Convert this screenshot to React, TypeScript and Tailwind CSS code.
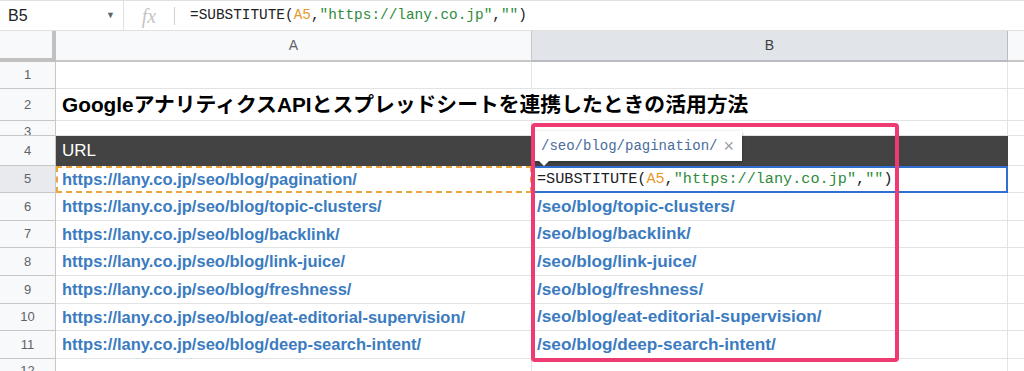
import React from 'react';

const urls = [
    'pagination',
    'topic-clusters',
    'backlink',
    'link-juice',
    'freshness',
    'eat-editorial-supervision',
    'deep-search-intent',
];

const rowHeights = [28, 27, 28, 28, 27, 28];

const sans = { fontFamily: '"Liberation Sans", Arial, "Noto Sans CJK JP", sans-serif' };
const mono = { fontFamily: '"Liberation Mono", "DejaVu Sans Mono", monospace' };

const Formula: React.FC = () => (
    <>
        <span className="text-[#202124]">=SUBSTITUTE(</span>
        <span className="text-[#e39b2c]">A5</span>
        <span className="text-[#202124]">,</span>
        <span className="text-[#2e8b3c]">"https://lany.co.jp"</span>
        <span className="text-[#202124]">,</span>
        <span className="text-[#2e8b3c]">""</span>
        <span className="text-[#202124]">)</span>
    </>
);

const RowHead: React.FC<{ n: number; active?: boolean; h: string }> = ({ n, active, h }) => (
    <div
        className={`w-[56px] shrink-0 flex items-center justify-center border-r border-b border-[#c7c7c7] text-[13px] text-[#5f6368] ${h} ${active ? 'bg-[#e8eaed]' : 'bg-[#f8f9fa]'}`}
    >
        {n}
    </div>
);

const App: React.FC = () => {
    return (
        <div className="relative w-[1024px] h-[371px] overflow-hidden bg-white" style={sans}>
            {/* Formula bar */}
            <div className="h-[31px] flex items-center border-t border-b border-[#e0e0e0]">
                <div className="w-[123px] shrink-0 flex items-center justify-between pl-2 pr-2 text-[16px] text-[#202124]">
                    <span>B5</span>
                    <span className="text-[9px] text-[#5f6368]">▼</span>
                </div>
                <div className="h-[30px] w-px bg-[#e0e0e0]" />
                <div className="w-[50px] flex items-center justify-center text-[20px] italic text-[#c4c4c4]" style={{ fontFamily: '"Liberation Serif", serif' }}>
                    fx
                </div>
                <div className="h-[18px] w-px bg-[#d0d0d0]" />
                <div className="pl-[15px] text-[14.4px] whitespace-nowrap" style={mono}>
                    <Formula />
                </div>
            </div>

            {/* Column headers */}
            <div className="h-[31px] flex text-[14px] text-[#5f6368]">
                <div className="w-[56px] shrink-0 bg-[#f8f9fa] border-r-4 border-b-4 border-[#c0c0c0]" />
                <div className="w-[476px] shrink-0 flex items-center justify-center bg-[#f8f9fa] border-r border-b-2 border-[#c7c7c7]">A</div>
                <div className="w-[476px] shrink-0 flex items-center justify-center bg-[#e1e4e8] text-[#3c4043] border-r border-b-2 border-[#b8bcc2]">B</div>
                <div className="flex-1 bg-[#f8f9fa] border-b-2 border-[#c7c7c7]" />
            </div>

            {/* Row 1 */}
            <div className="flex">
                <RowHead n={1} h="h-[27px]" />
                <div className="w-[476px] h-[27px] border-r border-b border-[#e2e3e3]" />
                <div className="w-[476px] h-[27px] border-r border-b border-[#e2e3e3]" />
                <div className="flex-1 h-[27px] border-b border-[#e2e3e3]" />
            </div>

            {/* Row 2 */}
            <div className="flex">
                <RowHead n={2} h="h-[32px]" />
                <div className="w-[952px] h-[32px] flex items-center pl-[6px] border-r border-b border-[#e2e3e3] text-[20.8px] font-bold text-black whitespace-nowrap">
                    GoogleアナリティクスAPIとスプレッドシートを連携したときの活用方法
                </div>
                <div className="flex-1 h-[32px] border-b border-[#e2e3e3]" />
            </div>

            {/* Row 3 */}
            <div className="flex">
                <div className="w-[56px] h-[15px] shrink-0 bg-[#f8f9fa] border-r border-b border-[#c7c7c7] text-[13px] text-[#5f6368] leading-[22px] text-center overflow-hidden">3</div>
                <div className="w-[476px] h-[15px] border-r border-b border-[#e2e3e3]" />
                <div className="w-[476px] h-[15px] border-r border-b border-[#e2e3e3]" />
                <div className="flex-1 h-[15px] border-b border-[#e2e3e3]" />
            </div>

            {/* Row 4 */}
            <div className="flex">
                <RowHead n={4} h="h-[30px]" />
                <div className="w-[952px] h-[30px] flex items-end pb-[3px] pl-[6px] bg-[#434343] text-[17px] text-white">URL</div>
                <div className="flex-1 h-[30px] border-b border-[#e2e3e3]" />
            </div>

            {/* Row 5 */}
            <div className="flex">
                <RowHead n={5} h="h-[27px]" active />
                <div className="w-[476px] h-[27px] flex items-center pl-[4px] border-2 border-dashed border-[#eba53c] text-[16.5px] font-bold text-[#3b7bbf] whitespace-nowrap">
                    https://lany.co.jp/seo/blog/{urls[0]}/
                </div>
                <div className="w-[476px] h-[27px] flex items-center pl-[3px] border-2 border-[#2f6fd0] text-[15.2px] whitespace-nowrap" style={mono}>
                    <Formula />
                </div>
                <div className="flex-1 h-[27px] border-b border-[#e2e3e3]" />
            </div>

            {/* Rows 6-11 */}
            {urls.slice(1).map((slug, i) => (
                <div key={slug} className="flex">
                    <RowHead n={i + 6} h={rowHeights[i] === 28 ? 'h-[28px]' : 'h-[27px]'} />
                    <div className={`w-[476px] ${rowHeights[i] === 28 ? 'h-[28px]' : 'h-[27px]'} flex items-center pl-[6px] border-r border-b border-[#e2e3e3] text-[16.5px] font-bold text-[#3b7bbf] whitespace-nowrap`}>
                        https://lany.co.jp/seo/blog/{slug}/
                    </div>
                    <div className={`w-[476px] ${rowHeights[i] === 28 ? 'h-[28px]' : 'h-[27px]'} flex items-center pl-[5px] border-r border-b border-[#e2e3e3] text-[17.2px] font-bold text-[#3b7bbf] whitespace-nowrap`}>
                        /seo/blog/{slug}/
                    </div>
                    <div className={`flex-1 ${rowHeights[i] === 28 ? 'h-[28px]' : 'h-[27px]'} border-b border-[#e2e3e3]`} />
                </div>
            ))}

            {/* Row 12 */}
            <div className="flex">
                <div className="w-[56px] h-[14px] shrink-0 bg-[#f8f9fa] border-r border-[#c7c7c7] text-[13px] text-[#5f6368] leading-[24px] text-center overflow-hidden">12</div>
                <div className="w-[476px] h-[14px] border-r border-[#e2e3e3]" />
                <div className="w-[476px] h-[14px] border-r border-[#e2e3e3]" />
            </div>

            {/* Result preview tooltip */}
            <div className="absolute left-[534px] top-[131px] h-[30px] flex items-center gap-[6px] pl-[7px] pr-[8px] bg-white shadow-[0_1px_3px_rgba(0,0,0,0.3)] text-[14px]">
                <span className="text-[#4a6d9c]" style={mono}>/seo/blog/pagination/</span>
                <span className="text-[18px] text-[#9aa0a6] leading-none">×</span>
                <div className="absolute left-[5px] -bottom-[5px] w-0 h-0 border-l-[5px] border-r-[5px] border-t-[5px] border-l-transparent border-r-transparent border-t-white" />
            </div>

            {/* Highlight frame */}
            <div className="absolute left-[531px] top-[123px] w-[368px] h-[239px] border-4 border-[#ee3b72] rounded-[4px] pointer-events-none" />
        </div>
    );
};

export default App;
